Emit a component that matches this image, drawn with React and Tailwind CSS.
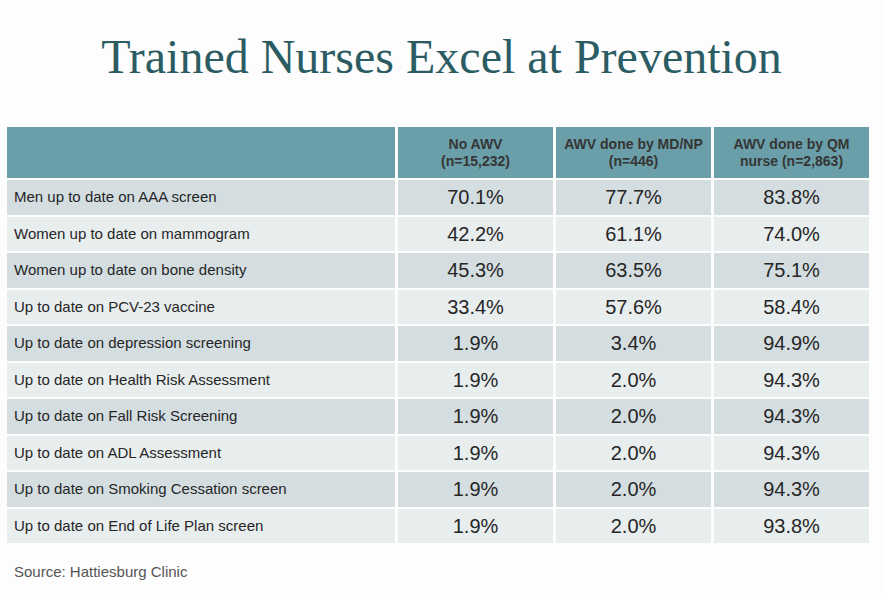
export default function App() {
  const rows = [
    ["Men up to date on AAA screen", "70.1%", "77.7%", "83.8%"],
    ["Women up to date on mammogram", "42.2%", "61.1%", "74.0%"],
    ["Women up to date on bone density", "45.3%", "63.5%", "75.1%"],
    ["Up to date on PCV-23 vaccine", "33.4%", "57.6%", "58.4%"],
    ["Up to date on depression screening", "1.9%", "3.4%", "94.9%"],
    ["Up to date on Health Risk Assessment", "1.9%", "2.0%", "94.3%"],
    ["Up to date on Fall Risk Screening", "1.9%", "2.0%", "94.3%"],
    ["Up to date on ADL Assessment", "1.9%", "2.0%", "94.3%"],
    ["Up to date on Smoking Cessation screen", "1.9%", "2.0%", "94.3%"],
    ["Up to date on End of Life Plan screen", "1.9%", "2.0%", "93.8%"],
  ];
  return (
    <div className="w-[883px] h-[594px] bg-[#fdfdfd] overflow-hidden" style={{ fontFamily: '"Liberation Sans", Arial, sans-serif' }}>
      <div className="pt-[30px] h-[127px] text-center">
        <h1 className="text-[48px] leading-[54px] text-[#2b5c63]" style={{ fontFamily: '"Liberation Serif", Georgia, serif' }}>
          Trained Nurses Excel at Prevention
        </h1>
      </div>
      <div className="ml-[7px] w-[861px] grid grid-cols-[388px_155px_155px_155px] gap-x-[3px] gap-y-[2px] text-[#262626]">
        <div className="h-[51px] bg-[#6a9ea8]" />
        <div className="h-[51px] bg-[#6a9ea8] flex flex-col items-center justify-center text-[14px] leading-[17px] font-bold text-[#353535]">
          <span>No AWV</span>
          <span>(n=15,232)</span>
        </div>
        <div className="h-[51px] bg-[#6a9ea8] flex flex-col items-center justify-center text-[14px] leading-[17px] font-bold text-[#353535]">
          <span>AWV done by MD/NP</span>
          <span>(n=446)</span>
        </div>
        <div className="h-[51px] bg-[#6a9ea8] flex flex-col items-center justify-center text-[14px] leading-[17px] font-bold text-[#353535]">
          <span>AWV done by QM</span>
          <span>nurse (n=2,863)</span>
        </div>
        {rows.map((r, i) => {
          const bg = i % 2 === 0 ? "bg-[#d4dee1]" : "bg-[#e8edee]";
          return [
            <div key={i + "a"} className={`h-[34.5px] ${bg} flex items-center pl-[7px] text-[15px]`}>{r[0]}</div>,
            <div key={i + "b"} className={`h-[34.5px] ${bg} flex items-center justify-center text-[20px]`}>{r[1]}</div>,
            <div key={i + "c"} className={`h-[34.5px] ${bg} flex items-center justify-center text-[20px]`}>{r[2]}</div>,
            <div key={i + "d"} className={`h-[34.5px] ${bg} flex items-center justify-center text-[20px]`}>{r[3]}</div>,
          ];
        })}
      </div>
      <div className="mt-[18px] ml-[14px] text-[15px] text-[#555]">Source: Hattiesburg Clinic</div>
    </div>
  );
}
